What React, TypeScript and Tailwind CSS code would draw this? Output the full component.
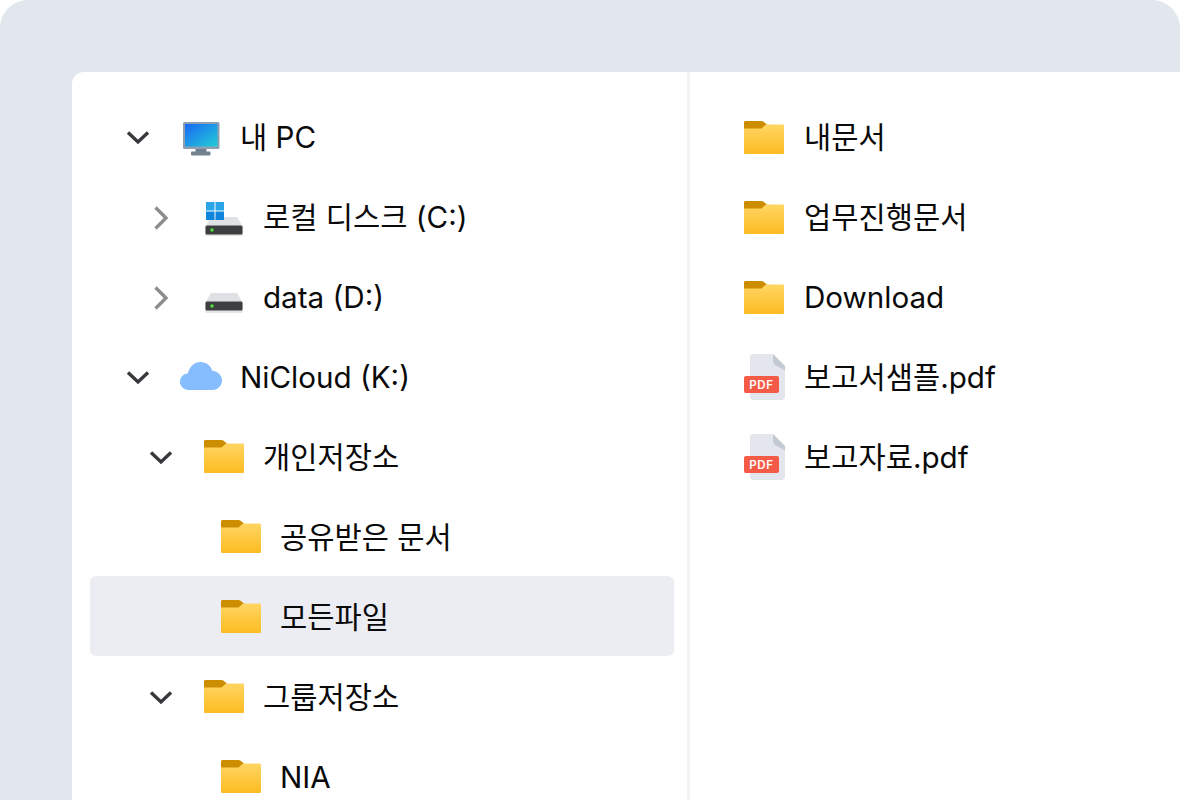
import React from "react";

function Folder() {
  return (
    <svg width="40" height="33" viewBox="0 0 40 33" className="shrink-0">
      <defs>
        <linearGradient id="folderFront" x1="0" y1="0" x2="0" y2="1">
          <stop offset="0" stopColor="#ffd562" />
          <stop offset="1" stopColor="#fdbc22" />
        </linearGradient>
      </defs>
      <path d="M1.5 0H17.5C18.3 0 19 .3 19.6 .8L23 3.5V12H0V1.5C0 .7 .7 0 1.5 0Z" fill="#cc8e00" />
      <path d="M0 7.5H17.5L22 3.5H38.7C39.4 3.5 40 4.1 40 4.8V31.7C40 32.4 39.4 33 38.7 33H1.3C.6 33 0 32.4 0 31.7Z" fill="url(#folderFront)" />
    </svg>
  );
}

function Pdf() {
  return (
    <svg width="42" height="46" viewBox="0 0 42 46" className="shrink-0">
      <path d="M9 0H29L41 12V43C41 44.6 39.6 46 38 46H9C7.4 46 6 44.6 6 43V3C6 1.4 7.4 0 9 0Z" fill="#e3e7ed" />
      <path d="M29 0L41 12V16.5L33 12C30.5 11 29 9.5 29 7Z" fill="#c3cad4" />
      <rect x="0" y="22" width="35" height="17" rx="2" fill="#f55a46" />
      <text x="17.5" y="35" textAnchor="middle" fontSize="11.5" fontWeight="600" fill="#fff" fontFamily="Inter, sans-serif" letterSpacing="0.6">PDF</text>
    </svg>
  );
}

function Monitor() {
  return (
    <svg width="40" height="40" viewBox="0 0 40 40" className="shrink-0">
      <defs>
        <linearGradient id="screen" x1="0" y1="0" x2="1" y2="1">
          <stop offset="0" stopColor="#1a68f5" />
          <stop offset="1" stopColor="#22cdd6" />
        </linearGradient>
      </defs>
      <rect x="14.5" y="32" width="11" height="4" fill="#6d7f8e" />
      <rect x="10" y="35.5" width="19.5" height="4" rx="1" fill="#72838f" />
      <rect x="2" y="6" width="36.5" height="27" rx="1.5" fill="#8f9fb2" />
      <rect x="4" y="8" width="32.5" height="22.5" fill="url(#screen)" />
    </svg>
  );
}

function Drive({ windows }: { windows?: boolean }) {
  const top = windows ? 21 : 17;
  return (
    <svg width="40" height="40" viewBox="0 0 40 40" className="shrink-0">
      <path d={`M6 ${top + 1.5}C6.4 ${top + 0.6} 7 ${top} 8 ${top}H32C33 ${top} 33.6 ${top + 0.6} 34 ${top + 1.5}L39 ${top + 10}H1Z`} fill="#dfe1e4" />
      <rect x="1" y={top + 8} width="38" height="12" rx="2" fill="#e4e5e7" />
      <rect x="1.5" y={top + 8.5} width="37" height="9" rx="1.5" fill="#3d3e40" />
      <circle cx="8" cy={top + 13} r="1.7" fill="#4fe03d" />
      {windows && (
        <g>
          <rect x="2" y="6" width="8.5" height="8.5" fill="#2aa5e8" />
          <rect x="11.5" y="6" width="8.5" height="8.5" fill="#2aa5e8" />
          <rect x="2" y="15.5" width="8.5" height="8.5" fill="#0f86dc" />
          <rect x="11.5" y="15.5" width="8.5" height="8.5" fill="#0f86dc" />
        </g>
      )}
    </svg>
  );
}

function Cloud() {
  return (
    <svg width="42" height="28" viewBox="0 0 42 28" className="shrink-0">
      <path d="M8.5 28C3.8 28 0 24.4 0 19.8C0 15.4 3.4 11.9 7.8 11.6C9.2 4.9 14.2 0 20.8 0C26.4 0 30.8 3.6 32.2 8.8C37.6 9.2 42 13.2 42 18.6C42 24 37.8 28 32.4 28Z" fill="#85bdff" />
    </svg>
  );
}

function Chevron({ open }: { open?: boolean }) {
  return open ? (
    <svg width="32" height="32" viewBox="0 0 32 32" className="shrink-0">
      <path d="M6 12.5L16 22L26 12.5" fill="none" stroke="#37393c" strokeWidth="3.4" />
    </svg>
  ) : (
    <svg width="32" height="32" viewBox="0 0 32 32" className="shrink-0">
      <path d="M10.5 7.5L21 18L10.5 28.5" fill="none" stroke="#8d8d8d" strokeWidth="3.4" />
    </svg>
  );
}

type Row = { label: string; level: number; icon: React.ReactNode; open?: boolean; active?: boolean };

const tree: Row[] = [
  { label: "내 PC", level: 0, icon: <Monitor />, open: true },
  { label: "로컬 디스크 (C:)", level: 1, icon: <Drive windows />, open: false },
  { label: "data (D:)", level: 1, icon: <Drive />, open: false },
  { label: "NiCloud (K:)", level: 0, icon: <Cloud />, open: true },
  { label: "개인저장소", level: 1, icon: <Folder />, open: true },
  { label: "공유받은 문서", level: 2, icon: <Folder /> },
  { label: "모든파일", level: 2, icon: <Folder />, active: true },
  { label: "그룹저장소", level: 1, icon: <Folder />, open: true },
  { label: "NIA", level: 2, icon: <Folder /> },
];

const files = [
  { label: "내문서", icon: <Folder /> },
  { label: "업무진행문서", icon: <Folder /> },
  { label: "Download", icon: <Folder /> },
  { label: "보고서샘플.pdf", icon: <Pdf /> },
  { label: "보고자료.pdf", icon: <Pdf /> },
];

export default function App() {
  return (
    <div className="w-[1180px] h-[800px] overflow-hidden bg-white font-['Inter','Noto_Sans_CJK_KR',sans-serif] text-[#0a0a0a] text-[29.6px] leading-none">
      <div className="h-full rounded-tl-[28px] rounded-tr-[28px] bg-[#e2e6ed] pl-[72px] pt-[72px]">
        <div className="h-full flex overflow-hidden rounded-tl-[12px] bg-white">
          <div className="w-[618px] shrink-0 border-r-[3px] border-[#f3f3f8] pl-[18px] pr-[13px] pt-[24px]">
            {tree.map((row) => (
              <div
                key={row.label}
                className={`h-[80px] flex items-center rounded-[6px] ${row.active ? "bg-[#ecedf2]" : ""} ${
                  row.level === 0 ? "pl-[32px]" : row.level === 1 ? "pl-[55px]" : "pl-[131px]"
                }`}
              >
                {row.open !== undefined && (
                  <div className="mr-[27px]">
                    <Chevron open={row.open} />
                  </div>
                )}
                <div className="w-[40px] mr-[19px] flex justify-center">{row.icon}</div>
                <span className="whitespace-nowrap pt-[3px]">{row.label}</span>
              </div>
            ))}
          </div>
          <div className="flex-1 pl-[54px] pt-[25px]">
            {files.map((file) => (
              <div key={file.label} className="h-[80px] flex items-center">
                <div className="w-[42px] mr-[18px] flex">{file.icon}</div>
                <span className="whitespace-nowrap pt-[1px]">{file.label}</span>
              </div>
            ))}
          </div>
        </div>
      </div>
    </div>
  );
}
